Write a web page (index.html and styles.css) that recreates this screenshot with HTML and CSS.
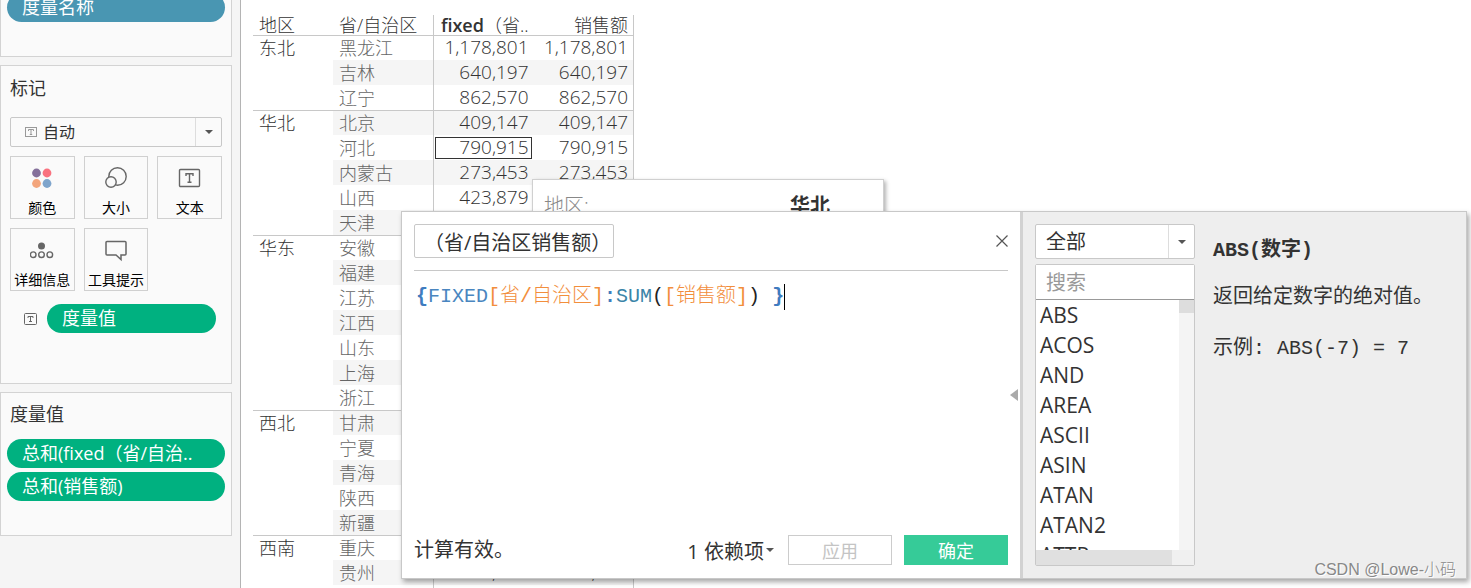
FILE: index.html
```html
<!DOCTYPE html>
<html lang="zh-CN">
<head>
    <meta charset="UTF-8">
    <meta name="viewport" content="width=device-width, initial-scale=1.0">
    <title>计算字段</title>
    <link rel="stylesheet" href="styles.css">
</head>
<body>
    <div class="app">
        <aside class="sidebar">
            <section class="card card-pages">
                <div class="pill pill-blue">度量名称</div>
            </section>

            <section class="card card-marks">
                <h2>标记</h2>
                <div class="dropdown mark-type">
                    <svg class="type-icon" width="12" height="12" viewBox="0 0 12 12" fill="none" stroke="#999">
                        <rect x="0.5" y="1.5" width="11" height="9"/>
                        <path d="M3.5 5V3.5h5V5M6 3.5v5M4.8 8.5h2.4"/>
                    </svg>
                    <select aria-label="标记类型"><option>自动</option></select>
                    <span class="arrow"></span>
                </div>
                <div class="mark-grid">
                    <button class="mark">
                        <svg width="24" height="24" viewBox="0 0 24 24">
                            <circle cx="6.5" cy="7" r="4.4" fill="#85709b"/>
                            <circle cx="17" cy="7" r="4.4" fill="#f9727f"/>
                            <circle cx="6.5" cy="17.5" r="4.4" fill="#f3a57c"/>
                            <circle cx="17" cy="17.5" r="4.4" fill="#7fa5cc"/>
                        </svg>
                        颜色
                    </button>
                    <button class="mark">
                        <svg width="24" height="24" viewBox="0 0 24 24" stroke="#666" stroke-width="1.4">
                            <circle cx="13.5" cy="10.5" r="8.7" fill="none"/>
                            <circle cx="7" cy="16" r="5.2" fill="#fafafa"/>
                        </svg>
                        大小
                    </button>
                    <button class="mark">
                        <svg width="24" height="24" viewBox="0 0 24 24" fill="none" stroke="#666" stroke-width="1.4">
                            <rect x="1.5" y="3.5" width="20" height="17" rx="1"/>
                            <path d="M8 10V7.700h7V10M11.500 7.700v8.500M9.500 16.300h4"/>
                        </svg>
                        文本
                    </button>
                    <button class="mark">
                        <svg width="24" height="24" viewBox="0 0 24 24" fill="none" stroke="#666" stroke-width="1.4">
                            <circle cx="11.5" cy="8" r="3.5" fill="#666" stroke="none"/>
                            <circle cx="3.200" cy="16.700" r="2.800"/>
                            <circle cx="11.500" cy="16.700" r="2.800"/>
                            <circle cx="19.800" cy="16.700" r="2.800"/>
                        </svg>
                        详细信息
                    </button>
                    <button class="mark">
                        <svg width="24" height="24" viewBox="0 0 24 24" fill="none" stroke="#666" stroke-width="1.5">
                            <path d="M3 3.500h18a1 1 0 0 1 1 1v11.500a1 1 0 0 1-1 1h-4v4.500L12 17H3a1 1 0 0 1-1-1V4.500a1 1 0 0 1 1-1z"/>
                        </svg>
                        工具提示
                    </button>
                </div>
                <div class="mark-field">
                    <svg width="14" height="14" viewBox="0 0 14 14" fill="none" stroke="#666">
                        <rect x="0.5" y="1.5" width="12" height="11" rx="1"/>
                        <path d="M4 6V4.500h5V6M6.500 4.500v5M5 9.500h3"/>
                    </svg>
                    <div class="pill">度量值</div>
                </div>
            </section>

            <section class="card card-measures">
                <h2>度量值</h2>
                <div class="pill">总和(fixed（省/自治..</div>
                <div class="pill">总和(销售额)</div>
            </section>
        </aside>

        <main class="sheet">
            <table>
                <thead>
                    <tr><th class="region">地区</th><th class="province">省/自治区</th><th class="num"><b>fixed</b>（省..</th><th class="num last">销售额</th></tr>
                </thead>
                <tbody>
                    <tr class="first"><th>东北</th><td>黑龙江</td><td class="num">1,178,801</td><td class="num last">1,178,801</td></tr>
                    <tr><th></th><td>吉林</td><td class="num">640,197</td><td class="num last">640,197</td></tr>
                    <tr><th></th><td>辽宁</td><td class="num">862,570</td><td class="num last">862,570</td></tr>
                    <tr class="first"><th>华北</th><td>北京</td><td class="num">409,147</td><td class="num last">409,147</td></tr>
                    <tr><th></th><td>河北</td><td class="num selected">790,915</td><td class="num last">790,915</td></tr>
                    <tr><th></th><td>内蒙古</td><td class="num">273,453</td><td class="num last">273,453</td></tr>
                    <tr><th></th><td>山西</td><td class="num">423,879</td><td class="num last"></td></tr>
                    <tr><th></th><td>天津</td><td class="num"></td><td class="num last"></td></tr>
                    <tr class="first"><th>华东</th><td>安徽</td><td class="num"></td><td class="num last"></td></tr>
                    <tr><th></th><td>福建</td><td class="num"></td><td class="num last"></td></tr>
                    <tr><th></th><td>江苏</td><td class="num"></td><td class="num last"></td></tr>
                    <tr><th></th><td>江西</td><td class="num"></td><td class="num last"></td></tr>
                    <tr><th></th><td>山东</td><td class="num"></td><td class="num last"></td></tr>
                    <tr><th></th><td>上海</td><td class="num"></td><td class="num last"></td></tr>
                    <tr><th></th><td>浙江</td><td class="num"></td><td class="num last"></td></tr>
                    <tr class="first"><th>西北</th><td>甘肃</td><td class="num"></td><td class="num last"></td></tr>
                    <tr><th></th><td>宁夏</td><td class="num"></td><td class="num last"></td></tr>
                    <tr><th></th><td>青海</td><td class="num"></td><td class="num last"></td></tr>
                    <tr><th></th><td>陕西</td><td class="num"></td><td class="num last"></td></tr>
                    <tr><th></th><td>新疆</td><td class="num"></td><td class="num last"></td></tr>
                    <tr class="first"><th>西南</th><td>重庆</td><td class="num"></td><td class="num last"></td></tr>
                    <tr><th></th><td>贵州</td><td class="num">52,448</td><td class="num last">52,448</td></tr>
                    <tr><th></th><td></td><td class="num"></td><td class="num last"></td></tr>
                </tbody>
            </table>
        </main>

        <div class="tooltip">
            <span>地区:</span>
            <b>华北</b>
        </div>

        <div class="dialog" role="dialog" aria-label="计算编辑器">
            <div class="editor">
                <div class="editor-head">
                    <input class="name" type="text" value="（省/自治区销售额）" aria-label="计算名称">
                    <button class="close" aria-label="关闭">
                        <svg width="12" height="12" viewBox="0 0 12 12" stroke="#555" stroke-width="1.2"><path d="M0.500 0.500l11 11M11.500 0.500l-11 11"/></svg>
                    </button>
                </div>
                <div class="formula" contenteditable="true" role="textbox" aria-label="公式" spellcheck="false"><span class="brace">{</span><span class="kw">FIXED</span><span class="field">[省/自治区]</span><span class="brace">:</span><span class="fn">SUM</span>(<span class="field">[销售额]</span>) <span class="brace">}</span><span class="caret"></span></div>
                <div class="editor-foot">
                    <span>计算有效。</span>
                    <button class="depends">1 依赖项<span class="arrow-down"></span></button>
                    <button class="btn" disabled>应用</button>
                    <button class="btn btn-ok">确定</button>
                </div>
                <button class="collapse" aria-label="折叠"></button>
            </div>

            <div class="reference">
                <div class="functions">
                    <div class="dropdown category">
                        <select aria-label="函数类别"><option>全部</option></select>
                        <span class="arrow"></span>
                    </div>
                    <div class="list-box">
                        <input type="text" placeholder="搜索" aria-label="搜索">
                        <ul>
                            <li>ABS</li>
                            <li>ACOS</li>
                            <li>AND</li>
                            <li>AREA</li>
                            <li>ASCII</li>
                            <li>ASIN</li>
                            <li>ATAN</li>
                            <li>ATAN2</li>
                            <li>ATTR</li>
                        </ul>
                        <div class="scroll-y"></div>
                        <div class="scroll-x"></div>
                    </div>
                </div>
                <div class="help">
                    <h3>ABS(数字)</h3>
                    <p>返回给定数字的绝对值。</p>
                    <p>示例: ABS(-7) = 7</p>
                </div>
            </div>
        </div>

        <div class="watermark">CSDN @Lowe-小码</div>
    </div>
</body>
</html>
```
FILE: styles.css
```css
* {
    box-sizing: border-box;
}
body {
    margin: 0;
    font-family: "Open Sans", "Noto Sans CJK SC", sans-serif;
    font-size: 18px;
    color: #333;
    background: #fff;
}
button, input, select {
    font-family: inherit;
    color: inherit;
    margin: 0;
}
.app {
    position: relative;
    display: flex;
    height: 100vh;
    overflow: hidden;
}

/* left shelf */
.sidebar {
    width: 241px;
    flex-shrink: 0;
    display: flex;
    flex-direction: column;
    gap: 8px;
    padding-right: 8px;
    background: #f5f5f5;
    border-right: 1px solid #b4b4b4;
}
.card {
    background: #fafafa;
    border: 1px solid #d3d3d3;
    padding: 8px 6px;
    flex-shrink: 0;
}
.card h2 {
    margin: 0 0 12px 3px;
    font-size: 18px;
    font-weight: normal;
    line-height: 28px;
}
.pill {
    height: 29px;
    line-height: 29px;
    padding-left: 15px;
    border-radius: 15px;
    background: #00b180;
    color: #fff;
    white-space: nowrap;
}
.pill-blue {
    background: #4996b2;
}
.card-pages {
    border-top: 0;
    padding: 0 6px 34px;
}
.card-pages .pill {
    margin-top: -7px;
}
.card-marks {
    padding: 8px 9px 50px;
}
.card-marks h2 {
    margin: 0 0 15px;
}
.card-measures {
    padding: 7px 6px 34px;
}
.card-measures h2 {
    margin-bottom: 11px;
}
.card-measures .pill + .pill {
    margin-top: 4px;
}

.dropdown {
    position: relative;
    border: 1px solid #c8c8c8;
    border-radius: 2px;
    background: #fff;
}
.dropdown select {
    appearance: none;
    width: 100%;
    height: 100%;
    border: 0;
    background: none;
}
.dropdown .arrow {
    position: absolute;
    top: 0;
    right: 0;
    bottom: 0;
    width: 26px;
    display: flex;
    align-items: center;
    justify-content: center;
    border-left: 1px solid #ddd;
    pointer-events: none;
}
.dropdown .arrow::before, .arrow-down {
    content: "";
    border: 4px solid transparent;
    border-top-color: #555;
    border-bottom: 0;
}
.mark-type {
    display: flex;
    align-items: center;
    height: 30px;
    padding-left: 14px;
    background: #fafafa;
}
.mark-type select {
    padding: 0 0 0 6px;
    font-size: 16px;
}
.type-icon {
    flex-shrink: 0;
}
.mark-grid {
    display: grid;
    grid-template-columns: repeat(3, 1fr);
    gap: 9px;
    margin-top: 9px;
}
.mark {
    display: flex;
    flex-direction: column;
    align-items: center;
    gap: 8px;
    height: 63px;
    padding: 9px 0 0;
    border: 1px solid #d0d0d0;
    background: #fafafa;
    color: #000;
    font-size: 14px;
    line-height: 20px;
    white-space: nowrap;
}
.mark-field {
    display: flex;
    align-items: center;
    gap: 9px;
    margin-top: 13px;
    padding: 0 6px 0 14px;
}
.mark-field .pill {
    flex: 1;
}

/* crosstab */
.sheet {
    flex: 1;
    padding: 15px 0 0 12px;
}
table {
    border-collapse: separate;
    border-spacing: 0;
    table-layout: fixed;
    width: 381px;
}
th, td {
    height: 25px;
    padding: 0 0 0 6px;
    line-height: 24px;
    font-weight: 300;
    text-align: left;
    white-space: nowrap;
}
thead th {
    height: 20px;
    line-height: 20px;
}
.region {
    width: 80px;
}
.province {
    width: 100px;
}
td {
    color: #666;
}
.num {
    padding: 0 5px;
    text-align: right;
    border-left: 1px solid #c8c8c8;
}
td.num {
    position: relative;
    padding-bottom: 2px;
    line-height: 22px;
    color: #333;
    font-size: 19px;
}
.num.last {
    border-left: 0;
    border-right: 1px solid #c8c8c8;
}
thead b {
    font-weight: 600;
}
tbody tr:nth-child(even) td {
    background: #f5f5f5;
}
.first th, .first td {
    border-top: 1px solid #c8c8c8;
}
/* frame round the picked cell */
.selected::after {
    content: "";
    position: absolute;
    inset: 2px 2px 1px 1px;
    border: 1px solid #333;
}

.tooltip {
    position: absolute;
    left: 532px;
    top: 179px;
    width: 352px;
    height: 60px;
    display: flex;
    justify-content: space-between;
    padding: 11px 53px 0 11px;
    border: 1px solid #d0d0d0;
    background: #fff;
    box-shadow: 2px 2px 4px rgba(0, 0, 0, 0.3);
    font-size: 20px;
    line-height: 30px;
}
.tooltip span {
    color: #888;
    font-weight: 300;
}

/* calculation editor */
.dialog {
    position: absolute;
    left: 401px;
    right: 4px;
    top: 211px;
    bottom: 9px;
    display: flex;
    border: 1px solid #c8c8c8;
    background: #fff;
    box-shadow: 2px 3px 5px rgba(0, 0, 0, 0.35);
    font-size: 20px;
}
.editor {
    position: relative;
    flex: 1;
    display: flex;
    flex-direction: column;
    padding: 12px 12px 13px;
}
.editor-head {
    display: flex;
    align-items: center;
    justify-content: space-between;
    padding-bottom: 12px;
    border-bottom: 1px solid #c8c8c8;
}
.name {
    width: 200px;
    height: 34px;
    padding: 0 0 0 9px;
    border: 1px solid #c8c8c8;
    border-radius: 2px;
    font-size: 20px;
}
.close {
    display: flex;
    padding: 0;
    border: 0;
    background: none;
}
.formula {
    flex: 1;
    padding: 13px 2px;
    font-family: "Liberation Mono", "Noto Sans CJK SC", monospace;
    font-weight: 300;
    line-height: 26px;
    color: #222;
    white-space: pre-wrap;
    outline: none;
}
.brace {
    color: #3f7cbf;
    font-weight: bold;
}
.kw {
    color: #4a86c0;
}
.fn {
    color: #3a84a8;
}
.field {
    color: #f28e3c;
}
.caret {
    display: inline-block;
    width: 1px;
    height: 26px;
    vertical-align: middle;
    background: #000;
}
.editor-foot {
    display: flex;
    align-items: center;
    gap: 12px;
    line-height: 30px;
}
.depends {
    display: flex;
    align-items: center;
    gap: 2px;
    margin-left: auto;
    padding: 0 2px 0 0;
    border: 0;
    background: none;
    font-size: 20px;
}
.btn {
    width: 104px;
    height: 30px;
    padding: 0;
    border: 1px solid #ccc;
    background: #fff;
    font-size: 18px;
}
.btn:disabled {
    color: #c4c4c4;
}
.btn-ok {
    border-color: #36cb98;
    background: #36cb98;
    color: #fff;
}
.collapse {
    position: absolute;
    right: 2px;
    top: 50%;
    width: 0;
    height: 0;
    padding: 0;
    border: 6px solid transparent;
    border-right: 8px solid #aaa;
    border-left: 0;
    background: none;
    transform: translateY(-50%);
}

.reference {
    width: 446px;
    display: flex;
    gap: 18px;
    padding: 12px;
    border-left: 3px solid #d2d2d2;
    background: #eee;
}
.functions {
    width: 160px;
    display: flex;
    flex-direction: column;
    gap: 5px;
}
.category {
    height: 35px;
}
.category select {
    padding: 0 0 0 10px;
    font-size: 20px;
}
.list-box {
    flex: 1;
    min-height: 0;
    display: grid;
    grid-template-columns: 1fr 15px;
    grid-template-rows: 35px 1fr 15px;
    border: 1px solid #c8c8c8;
    border-radius: 2px;
    background: #fff;
}
.list-box input {
    grid-column: 1 / 3;
    min-width: 0;
    padding: 0 10px;
    border: 0;
    border-bottom: 1px solid #999;
    font-size: 20px;
}
.list-box input::placeholder {
    color: #999;
}
.list-box ul {
    margin: 0;
    padding: 0 0 0 4px;
    overflow: hidden;
    list-style: none;
    font-size: 21px;
    line-height: 30px;
}
.scroll-y {
    background: linear-gradient(#ddd, #ddd) no-repeat 0 0 / 15px 13px #f4f4f4;
}
.scroll-x {
    grid-column: 1 / 3;
    background: linear-gradient(#e0e0e0, #e0e0e0) no-repeat 0 0 / 136px 15px #f0f0f0;
}
.help {
    font-family: "Liberation Mono", "Noto Sans CJK SC", monospace;
}
.help h3 {
    margin: 12px 0 17px;
    font-size: 20px;
    line-height: 30px;
}
.help p {
    margin: 0 0 21px;
    line-height: 30px;
    white-space: nowrap;
}

.watermark {
    position: absolute;
    right: 15px;
    bottom: 8px;
    font-family: "Liberation Sans", "Noto Sans CJK SC", sans-serif;
    font-size: 16px;
    font-weight: 300;
    line-height: 20px;
    color: #888;
    text-shadow: 1px 1px 0 #fff;
}
```
